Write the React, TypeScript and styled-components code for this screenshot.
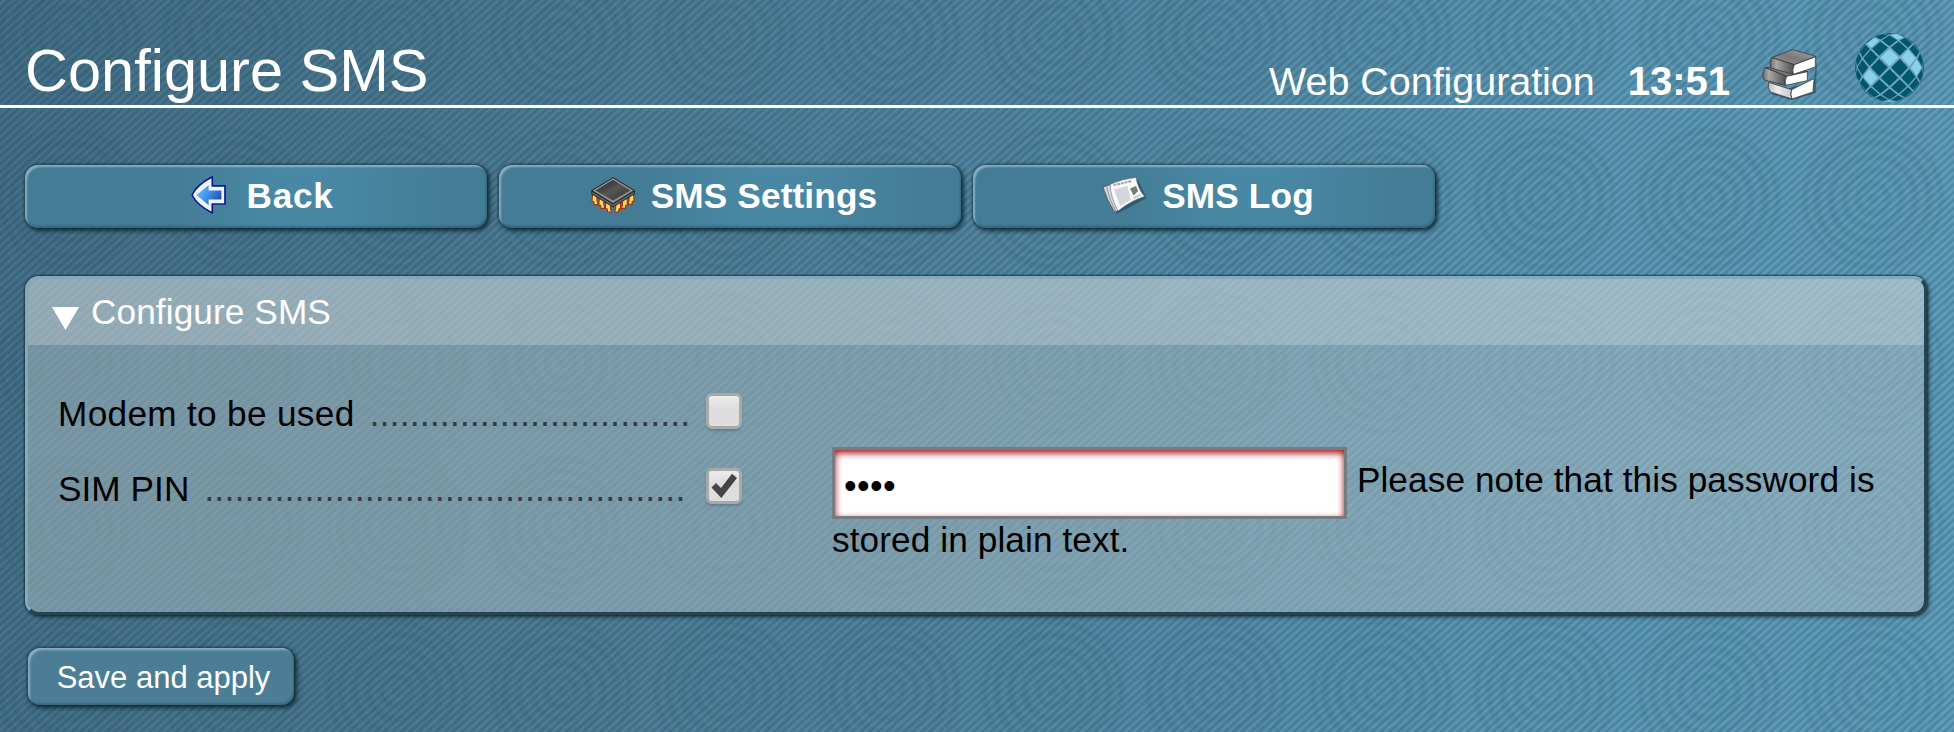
import React from 'react';
import styled, { createGlobalStyle } from 'styled-components';

const GlobalStyle = createGlobalStyle`
  * { box-sizing: border-box; }
  html, body { margin: 0; padding: 0; }
  body {
    font-family: "Liberation Sans", Arial, sans-serif;
    font-size: 35.2px;
    line-height: 42px;
    color: #000;
  }
`;

const Page = styled.div`
  min-height: 732px;
  overflow: hidden;
  background:
    repeating-linear-gradient(138deg, rgba(14, 50, 70, 0.24) 0 0.8px, rgba(14, 50, 70, 0) 2.8px 3.2px, rgba(14, 50, 70, 0.24) 5.8px),
    radial-gradient(circle at center,
      rgba(20, 70, 80, 0.07) 3px, rgba(20, 70, 80, 0) 7px 10px,
      rgba(20, 70, 80, 0.08) 14px 16px, rgba(20, 70, 80, 0) 20px 23px,
      rgba(20, 70, 80, 0.08) 27px 30px, rgba(20, 70, 80, 0) 34px 37px,
      rgba(20, 70, 80, 0.08) 41px 44px, rgba(20, 70, 80, 0) 48px 51px,
      rgba(20, 70, 80, 0.08) 55px 58px, rgba(20, 70, 80, 0) 62px 64px,
      rgba(20, 70, 80, 0.07) 67px 69px, rgba(20, 70, 80, 0) 73px) -13px -47px / 164px 164px,
    linear-gradient(97deg, #46718a 0%, #4b788f 15%, #518199 35%, #568ca7 58%, #5f9bb8 80%, #63a0be 100%);
`;

const Header = styled.header`
  display: flex;
  align-items: flex-end;
  justify-content: space-between;
  height: 108px;
  padding: 0 30px 0 25px;
  border-bottom: 3px solid #fff;
  color: #fff;
`;

const Title = styled.h1`
  margin: 0;
  font-size: 59.5px;
  font-weight: 400;
  line-height: 68px;
`;

const HeaderInfo = styled.div`
  display: flex;
  align-items: flex-end;
  font-size: 40px;
  line-height: 44px;
`;

const Caption = styled.span`
  margin: 0 33px 2px 0;
  font-size: 39.5px;
  letter-spacing: -0.05px;
`;

const Clock = styled.strong`
  margin: 0 31px 2px 0;
`;

const BooksSvg = styled.svg`
  width: 57px;
  height: 53px;
  margin: 0 37px 4px 0;
`;

const GlobeSvg = styled.svg`
  width: 69px;
  height: 69px;
  margin-bottom: 3px;
`;

const bevel = `
  box-shadow:
    0 0 2px 1px rgba(12, 40, 52, 0.45),
    2px 2px 4px 1px rgba(8, 30, 40, 0.75),
    inset 3px 3px 2px -1px rgba(170, 202, 216, 0.65),
    inset -1px -2px 2px rgba(10, 50, 70, 0.3);
`;

const Nav = styled.nav`
  display: flex;
  gap: 12px;
  padding: 57px 25px 0;
`;

const NavButton = styled.a<{ $spacing?: number }>`
  display: flex;
  align-items: center;
  justify-content: center;
  gap: 16px;
  width: 462px;
  height: 63px;
  padding: 0 0 1px 8px;
  border-radius: 13px;
  background: linear-gradient(90deg, #447b95 0%, #447b95 30%, #4988a4 55%, #4988a4 65%, #447b95 95%);
  color: #fff;
  font-weight: 700;
  letter-spacing: ${p => p.$spacing ?? 0.15}px;
  ${bevel}
`;

const NavIcon = styled.svg`
  width: 44px;
  height: 40px;
  flex: none;
  margin-bottom: 3px;
`;

const Panel = styled.section`
  margin: 48px 27px 0 25px;
  height: 339px;
  border: 3px solid;
  border-color: #84a9b8 #24444f #24444f #84a9b8;
  border-radius: 14px;
  background: rgba(174, 190, 196, 0.5);
  background-clip: padding-box;
  box-shadow: 0 0 2px 1px rgba(16, 40, 50, 0.7), 2px 2px 4px rgba(0, 0, 0, 0.5);
`;

const PanelHead = styled.h2`
  display: flex;
  align-items: center;
  gap: 12px;
  height: 66px;
  margin: 0;
  padding: 0 0 1px 24px;
  border-radius: 10px 10px 0 0;
  background: rgba(255, 255, 255, 0.21);
  color: #fff;
  font-size: 35.2px;
  font-weight: 400;
  letter-spacing: 0.1px;
`;

const Triangle = styled.svg`
  width: 27px;
  height: 23px;
  margin-top: 14px;
`;

const Fields = styled.div`
  display: grid;
  grid-template-columns: 630px 36px 1172px;
  grid-template-rows: 54px auto;
  padding: 48px 0 0 30px;
`;

const Label = styled.div<{ $drop?: boolean }>`
  display: flex;
  padding: ${p => (p.$drop ? 21 : 0)}px 0 0;
  white-space: nowrap;
  letter-spacing: ${p => (p.$drop ? 0.05 : 0.32)}px;
`;

const Dots = styled.span`
  flex: 1;
  min-width: 0;
  height: 42px;
  margin-left: 15px;
  overflow: hidden;
  color: #363a42;
  font-size: 36px;
  letter-spacing: 0.02px;
`;

const CheckCell = styled.div<{ $drop?: boolean }>`
  display: flex;
  padding: ${p => (p.$drop ? 21 : 0)}px 0 0 18px;
`;

const CheckBox = styled.span`
  display: flex;
  flex: none;
  width: 36px;
  height: 36px;
  border: 3px solid #a8a9aa;
  border-radius: 6px;
  background: linear-gradient(#ededed, #dcdcdc 45%, #dedede);
  box-shadow: 0 2px 2px rgba(60, 90, 110, 0.4);
`;

const Note = styled.div`
  grid-column: 3;
  padding-left: 108px;
  line-height: 41px;
  letter-spacing: 0.1px;
`;

const Pin = styled.input`
  width: 515px;
  height: 72px;
  margin: 0;
  padding: 5px 9px 0;
  border: 3px solid #777a7e;
  border-radius: 0;
  background: #fff;
  box-shadow: inset 0 3px 7px #a00810;
  color: #000;
  font: 36px "Liberation Sans", Arial, sans-serif;
  letter-spacing: 0.4px;
  vertical-align: middle;
  outline: none;
`;

const Save = styled.button`
  display: block;
  width: 266px;
  height: 57px;
  margin: 33px 0 0 28px;
  padding: 3px 0 0 5px;
  border: 0;
  border-radius: 12px;
  background: #4b7e95;
  color: #fff;
  font: 31px "Liberation Sans", Arial, sans-serif;
  ${bevel}
`;

const STEP = 0.31;
const LIGHT_TILES = ['0,-1', '2,-1', '3,0', '-2,1', '-2,-3', '1,-4', '0,5'];

/* Projects a point given in angular distance from the globe's centre. */
const project = (x: number, y: number) => {
  const d = Math.hypot(x, y);
  const s = d === 0 ? 1 : Math.sin(Math.min(d, Math.PI / 2)) / d;
  return `${(x * s * 34.3).toFixed(2)},${(y * s * 34.3).toFixed(2)}`;
};

const tiles: { key: string; points: string }[] = [];
for (let k = -5; k <= 5; k++) {
  for (let l = -5; l <= 5; l++) {
    const cx = k * STEP;
    const cy = l * STEP;
    if ((k + l) % 2 === 0 || Math.hypot(cx, cy) > 1.7) continue;
    const h = STEP * 0.85;
    const points = [project(cx, cy - h), project(cx + h, cy), project(cx, cy + h), project(cx - h, cy)].join(' ');
    tiles.push({ key: `${k},${l}`, points });
  }
}

const Globe = () => (
  <GlobeSvg viewBox="-34.5 -34.5 69 69">
    <circle r="33.5" fill="#86b4c8" opacity="0.6" />
    {tiles.map(t => (
      <polygon key={t.key} points={t.points} fill={LIGHT_TILES.includes(t.key) ? '#87d1ef' : '#00566d'} />
    ))}
  </GlobeSvg>
);

const Books = () => (
  <BooksSvg viewBox="64 81 171 159">
    <defs>
      <linearGradient id="bkTop" x1="0" y1="1" x2="1" y2="0">
        <stop offset="0" stopColor="#8c8c8c" />
        <stop offset="0.5" stopColor="#7c7c7c" />
        <stop offset="1" stopColor="#a8a8a8" />
      </linearGradient>
      <linearGradient id="bkSide" x1="0" x2="1">
        <stop offset="0" stopColor="#6a6a6a" />
        <stop offset="0.25" stopColor="#a8a8a8" />
        <stop offset="1" stopColor="#4c4c4c" />
      </linearGradient>
      <linearGradient id="bkLow" x1="0" x2="1">
        <stop offset="0" stopColor="#bdbdbd" />
        <stop offset="0.4" stopColor="#eee" />
        <stop offset="1" stopColor="#c4c4c4" />
      </linearGradient>
    </defs>
    <path d="M90 218L156 238L228 216L230 180L232 112L222 180Z" fill="#173845" opacity="0.5" />
    <g stroke="#3a3a3a" strokeWidth="2.4" strokeLinejoin="round">
      <path d="M87 184L156 206Q151 220 157 234L92 213Q83 201 87 184Z" fill="url(#bkLow)" />
      <path d="M156 206L220 174L223 178L220 206L222 212L157 234Q151 220 156 206Z" fill="#fff" />
      <path d="M76 140L100 138L205 152L141 166Z" fill="#777" />
      <path d="M76 140L141 166Q134 179 138 193L74 177Q64 158 76 140Z" fill="url(#bkSide)" />
      <path d="M141 166L203 152L203 179L138 193Q134 179 141 166Z" fill="#fff" />
      <path d="M96 110L155 87Q159 86 163 87L229 106L164 131Z" fill="url(#bkTop)" />
      <path d="M96 110L164 131Q157 145 161 160L94 141Q88 125 96 110Z" fill="url(#bkSide)" />
      <path d="M164 131L229 107L227 114V138L161 160Q157 145 164 131Z" fill="#fff" />
    </g>
  </BooksSvg>
);

const BackIcon = () => (
  <NavIcon viewBox="0 0 44 40">
    <defs>
      <linearGradient id="arrow" x1="0" y1="0.2" x2="1" y2="0.7">
        <stop offset="0" stopColor="#6cc0ff" />
        <stop offset="0.5" stopColor="#3e8fe6" />
        <stop offset="1" stopColor="#1b4fa8" />
      </linearGradient>
    </defs>
    <path
      d="M25.3 1.8V10.8H38V29H25.3V38Q10 30 5.6 21Q5.2 20 5.6 19Q10 10 25.3 1.8Z"
      fill="#f1f3fb"
      stroke="#0a1c8c"
      strokeWidth="1.7"
      strokeLinejoin="round"
    />
    <path d="M21.6 10V15.5H34.4V24.6H21.6V30.2L9.6 20Z" fill="url(#arrow)" />
  </NavIcon>
);

const LEGS = [
  [1.6, 18.6], [8.4, 22.4], [15, 26], [25.6, 26], [32.4, 22.4], [39, 18.4],
];

const ChipIcon = () => (
  <NavIcon viewBox="0 0 44 40">
    <defs>
      <linearGradient id="chip" x1="0" y1="0" x2="1" y2="1">
        <stop offset="0" stopColor="#222" />
        <stop offset="0.5" stopColor="#555" />
        <stop offset="1" stopColor="#333" />
      </linearGradient>
    </defs>
    {LEGS.map(([x, y], i) => (
      <path
        key={x}
        transform={i < 3 ? `translate(${x} ${y})` : `translate(${x + 3.5} ${y}) scale(-1 1)`}
        d="M0 0H4.4V7L5.4 11H1.6L1.2 8L-0.6 7.4Z"
        fill="#ffd95a"
        stroke="#a8300c"
        strokeWidth="1.1"
      />
    ))}
    <path d="M0.8 15.8L22 28.6L43.4 15.8V19L22 32L0.8 19Z" fill="#5c5f62" stroke="#1b1b1b" strokeWidth="0.8" />
    <path d="M22 2.6L43.4 15.6L22 28.6L0.8 15.6Z" fill="#8e9193" stroke="#202020" strokeWidth="1" />
    <path d="M22 4.8L39.4 15.4L22 25.4L4.6 15.4Z" fill="url(#chip)" />
  </NavIcon>
);

const NewsIcon = () => (
  <NavIcon viewBox="0 0 44 40">
    <path d="M3 15L15 38.5L30 31L44.6 23L36 5Z" fill="#163745" opacity="0.5" />
    <path d="M1 12L10 9L34 3.5L35 21L14 37L12 36Q5 25 1 12Z" fill="#d8d9dd" stroke="#494d5c" strokeWidth="0.8" />
    <path d="M4.6 11.4Q8 27 14 36" fill="none" stroke="#8a8c96" strokeWidth="0.9" />
    <path d="M8 9.4Q20 4 34 2.4Q36 14 42.6 21.4Q28 26 16 36Q9 24 8 9.4Z" fill="#fafafa" stroke="#62667a" strokeWidth="0.6" />
    <path d="M11.4 10.2L30 6" stroke="#aaa" strokeWidth="2.2" strokeDasharray="3 0.8" />
    <path d="M12 14.4L25.6 11L28.6 25L18 31Z" fill="#d3d6de" />
    <path d="M28 13.4L34 11L36.2 16L31.6 20.6Z" fill="#777c77" />
    <path d="M31.6 23L39 19.6" stroke="#c8cad2" strokeWidth="2" />
  </NavIcon>
);

const dotted = '.'.repeat(49);

export default function App() {
  return (
    <>
      <GlobalStyle />
      <Page>
        <Header>
          <Title>Configure SMS</Title>
          <HeaderInfo>
            <Caption>Web Configuration</Caption>
            <Clock>13:51</Clock>
            <Books />
            <Globe />
          </HeaderInfo>
        </Header>
        <Nav>
          <NavButton $spacing={0.7}><BackIcon />Back</NavButton>
          <NavButton><ChipIcon />SMS Settings</NavButton>
          <NavButton><NewsIcon />SMS Log</NavButton>
        </Nav>
        <Panel>
          <PanelHead>
            <Triangle viewBox="0 0 27 23"><path d="M0 0H27L13.5 23Z" fill="#fff" /></Triangle>
            Configure SMS
          </PanelHead>
          <Fields>
            <Label>Modem to be used<Dots>{dotted.slice(0, 32)}</Dots></Label>
            <CheckCell><CheckBox /></CheckCell>
            <span />
            <Label $drop>SIM PIN<Dots>{dotted}</Dots></Label>
            <CheckCell $drop>
              <CheckBox>
                <svg width="30" height="30" viewBox="0 0 30 30">
                  <path d="M2.5 16.5L7 12L12 17L23 2.8L28 7L12.3 27Z" fill="#444" />
                </svg>
              </CheckBox>
            </CheckCell>
            <Note>
              <Pin type="password" defaultValue="0000" /> Please note that this password is stored in plain text.
            </Note>
          </Fields>
        </Panel>
        <Save>Save and apply</Save>
      </Page>
    </>
  );
}
